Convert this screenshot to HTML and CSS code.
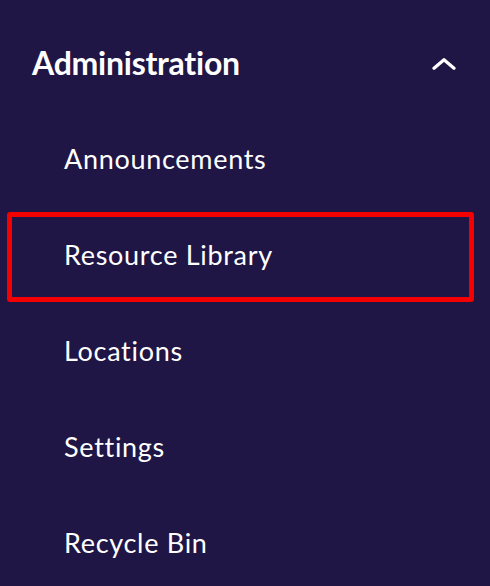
FILE: index.html
```html
<!DOCTYPE html>
<html lang="en">
<head>
<meta charset="utf-8">
<title>Administration menu</title>
<link rel="stylesheet" href="styles.css">
</head>
<body>
<nav class="menu">
  <div class="menu-header">
    <span class="menu-title">Administration</span>
    <svg class="chevron" width="24" height="12" viewBox="0 0 24 12" aria-hidden="true">
      <polyline points="2,10.3 12,1.7 22,10.3" fill="none" stroke="#ffffff" stroke-width="3.2" stroke-linecap="round" stroke-linejoin="round"/>
    </svg>
  </div>
  <ul class="menu-list">
    <li class="menu-item">Announcements</li>
    <li class="menu-item is-highlighted">Resource Library</li>
    <li class="menu-item">Locations</li>
    <li class="menu-item">Settings</li>
    <li class="menu-item">Recycle Bin</li>
  </ul>
</nav>
</body>
</html>
```

FILE: styles.css
```css
html, body {
  margin: 0;
  padding: 0;
  background: #201646;
  height: 100%;
  overflow: hidden;
}

body {
  font-family: Lato, "Open Sans", "Liberation Sans", sans-serif;
  color: #ffffff;
}

.menu {
  display: flex;
  flex-direction: column;
}

.menu-header {
  display: flex;
  align-items: center;
  justify-content: space-between;
  padding: 43px 34px 28px 32px;
}

.menu-title {
  font-size: 32px;
  font-weight: 700;
  line-height: 40px;
  letter-spacing: -0.25px;
}

.chevron {
  display: block;
  margin-top: 2px;
}

.menu-list {
  list-style: none;
  margin: 0;
  padding: 0;
}

.menu-item {
  position: relative;
  display: flex;
  align-items: center;
  height: 96px;
  padding-left: 64px;
  font-size: 27px;
  font-weight: 400;
  line-height: 32px;
  letter-spacing: 0.7px;
}

.is-highlighted::after {
  content: "";
  position: absolute;
  left: 7px;
  top: 5px;
  width: 467px;
  height: 90px;
  box-sizing: border-box;
  border: 5px solid #f40000;
  border-radius: 3px;
}
```
